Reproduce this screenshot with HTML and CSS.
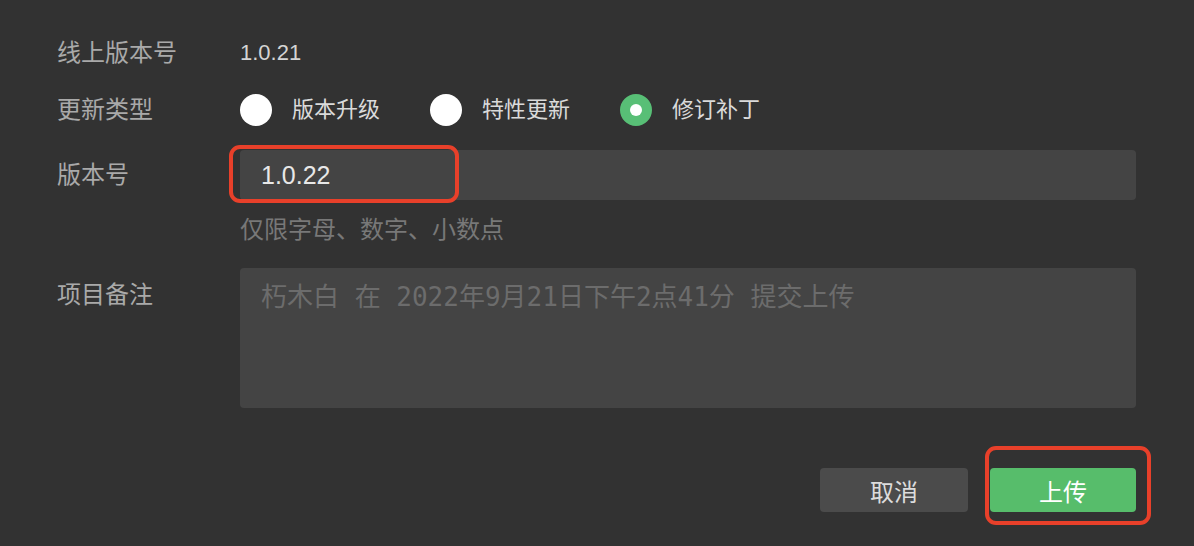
FILE: index.html
```html
<!DOCTYPE html>
<html>
<head>
    <meta charset="utf-8">
    <title>上传</title>
    <link rel="stylesheet" href="styles.css">
</head>
<body>
    <div class="dialog">
        <!-- 线上版本 -->
        <div class="row row-online">
            <div class="label">线上版本号</div>
            <div class="value">1.0.21</div>
        </div>

        <!-- 更新类型 -->
        <div class="row row-type">
            <div class="label">更新类型</div>
            <div class="radio-group">
                <label class="radio"><span class="dot"></span>版本升级</label>
                <label class="radio"><span class="dot"></span>特性更新</label>
                <label class="radio checked"><span class="dot"></span>修订补丁</label>
            </div>
        </div>

        <!-- 版本号 -->
        <div class="row row-version">
            <div class="label">版本号</div>
            <div class="field">
                <div class="input">1.0.22</div>
                <div class="mark mark-input"></div>
            </div>
        </div>
        <div class="hint">仅限字母、数字、小数点</div>

        <!-- 项目备注 -->
        <div class="row row-desc">
            <div class="label">项目备注</div>
            <div class="textarea">朽木白 在 2022年9月21日下午2点41分 提交上传</div>
        </div>

        <div class="footer">
            <button class="btn btn-cancel">取消</button>
            <div class="btn-wrap">
                <button class="btn btn-upload">上传</button>
                <div class="mark mark-upload"></div>
            </div>
        </div>
    </div>
</body>
</html>
```

FILE: styles.css
```css
html, body {
    margin: 0;
    padding: 0;
    background-color: #323232;
    font-family: "Liberation Sans", "Noto Sans CJK SC", sans-serif;
}
.dialog {
    padding: 37px 58px 34px 57px;
}
.row {
    display: flex;
    align-items: center;
}
.label {
    width: 183px;
    flex-shrink: 0;
    font-size: 24px;
    line-height: 32px;
    color: #a9a9a9;
}
.value {
    font-size: 22px;
    color: #d4d4d4;
}
/* 更新类型 */
.row-type {
    margin-top: 25px;
}
.radio-group {
    display: flex;
}
.radio {
    display: flex;
    align-items: center;
    width: 190px;
    font-size: 22px;
    line-height: 32px;
    color: #dadada;
}
.dot {
    width: 32px;
    height: 32px;
    border-radius: 50%;
    background-color: #fff;
    margin-right: 20px;
    box-sizing: border-box;
}
.radio.checked .dot {
    background-color: #58bf76;
    border: 10px solid #58bf76;
}
.radio.checked .dot::after {
    content: "";
    display: block;
    width: 12px;
    height: 12px;
    border-radius: 50%;
    background-color: #fff;
}
/* 版本号 */
.row-version {
    margin-top: 24px;
}
.field {
    flex: 1;
    position: relative;
}
.input {
    height: 50px;
    line-height: 50px;
    background-color: #444;
    border-radius: 4px;
    padding-left: 21px;
    font-size: 25px;
    color: #e8e8e8;
}
.hint {
    margin: 15px 0 0 183px;
    font-size: 24px;
    line-height: 30px;
    color: #787878;
}
/* 项目备注 */
.row-desc {
    margin-top: 23px;
    align-items: flex-start;
}
.row-desc .label {
    padding-top: 11px;
}
.textarea {
    flex: 1;
    height: 140px;
    box-sizing: border-box;
    background-color: #444;
    border-radius: 4px;
    padding: 14px 21px;
    font-family: "DejaVu Sans Mono", "Noto Sans CJK SC", monospace;
    font-size: 26px;
    line-height: 30px;
    color: #6c6c6c;
    white-space: pre;
}
.footer {
    display: flex;
    justify-content: flex-end;
    margin-top: 60px;
    gap: 22px;
}
.btn {
    height: 44px;
    border: none;
    border-radius: 4px;
    font-family: "Liberation Sans", "Noto Sans CJK SC", sans-serif;
    font-size: 24px;
    padding: 0;
}
.btn-cancel {
    width: 148px;
    background-color: #4b4b4b;
    color: #dcdcdc;
}
.btn-wrap {
    position: relative;
}
.btn-upload {
    display: block;
    width: 146px;
    background-color: #57bd6b;
    color: #fff;
}
/* 红色标注框 */
.mark {
    position: absolute;
    border: 4px solid #e8402a;
    border-radius: 11px;
    box-sizing: border-box;
}
.mark-input {
    left: -11px;
    top: -5px;
    width: 230px;
    height: 58px;
}
.mark-upload {
    left: -5px;
    top: -22px;
    width: 166px;
    height: 79px;
}
```
